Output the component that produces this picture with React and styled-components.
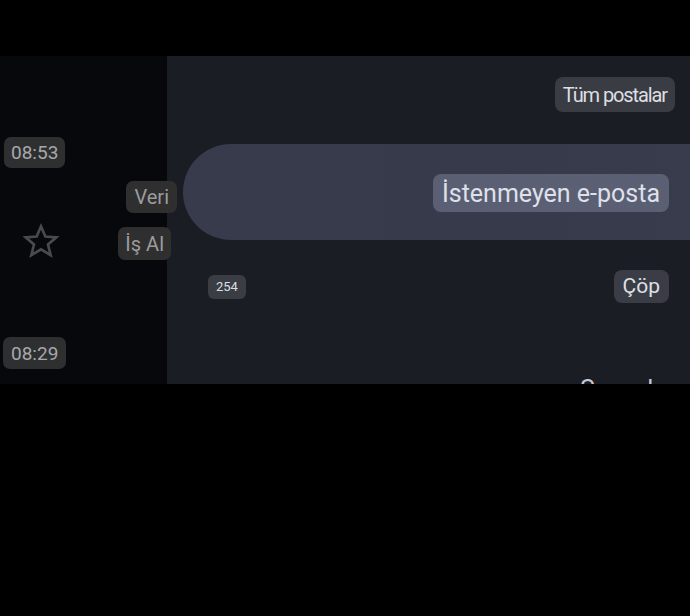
import React from "react";
import styled, { createGlobalStyle } from "styled-components";

const Global = createGlobalStyle`
  html, body { margin: 0; padding: 0; background: #000; }
  body { font-family: Roboto, "Noto Sans", "Liberation Sans", sans-serif; }
`;

const Page = styled.div`
  width: 690px;
  height: 616px;
  background: #000;
  display: flex;
  flex-direction: column;
  overflow: hidden;
`;

const TopBar = styled.div`
  height: 56px;
  flex: none;
  background: #000;
`;

const Content = styled.div`
  height: 328px;
  flex: none;
  display: grid;
  grid-template-columns: 167px 1fr;
  overflow: hidden;
`;

const LeftPanel = styled.div`
  background: #07080b;
  display: flex;
  flex-direction: column;
  padding: 81px 0 0 4px;
  position: relative;
  z-index: 1;
  & > * { flex: none; }
`;

const Chip = styled.span`
  display: inline-flex;
  align-items: center;
  justify-content: center;
  box-sizing: border-box;
  height: ${(p) => p.$h}px;
  padding: 0 ${(p) => p.$px}px;
  border-radius: ${(p) => p.$r || 7}px;
  background: ${(p) => p.$bg};
  color: ${(p) => p.$fg};
  font-size: ${(p) => p.$fs}px;
  letter-spacing: ${(p) => p.$ls || 0}px;
  white-space: nowrap;
  line-height: 1;
`;

const TimeRow = styled.div`
  display: flex;
  margin-left: ${(p) => p.$ml || 0}px;
  margin-top: ${(p) => p.$mt || 0}px;
`;

const StarRow = styled.div`
  display: flex;
  justify-content: space-between;
  align-items: flex-start;
  margin-top: 13px;
`;

const StarWrap = styled.div`
  margin: 40px 0 0 17px;
  width: 40px;
  height: 40px;
  display: flex;
`;

const LabelStack = styled.div`
  display: flex;
  flex-direction: column;
  align-items: flex-end;
  gap: 14px;
`;

const LabelSlot = styled.div`
  margin-right: ${(p) => p.$mr}px;
  display: flex;
`;

const RightPanel = styled.div`
  background: #1b1d24;
  display: flex;
  flex-direction: column;
  padding-top: 21px;
  overflow: hidden;
  & > * { flex: none; }
`;

const TopRow = styled.div`
  display: flex;
  justify-content: flex-end;
  padding-right: 15px;
`;

const Pill = styled.div`
  margin: 32px -60px 0 16px;
  height: 96px;
  border-radius: 48px;
  background: linear-gradient(90deg, #373b4c 0%, #363a4a 60%, #383c4c 100%);
  display: flex;
  align-items: center;
  justify-content: flex-end;
  padding-right: 81px;
  padding-top: 2px;
  box-sizing: border-box;
`;

const CountRow = styled.div`
  display: flex;
  justify-content: space-between;
  align-items: center;
  margin-top: 30px;
  padding: 0 21px 0 41px;
`;

const BottomText = styled.div`
  margin-top: 74px;
  padding-left: 413px;
  color: #c8cad2;
  font-size: 25px;
  line-height: 1;
  white-space: nowrap;
`;

const Star = () => (
  <svg width="40" height="40" viewBox="0 0 24 24" fill="none">
    <path
      d="M12 3.2l2.6 6.1 6.6.5-5 4.3 1.6 6.4L12 17l-5.8 3.5 1.6-6.4-5-4.3 6.6-.5z"
      stroke="#4a4a4c"
      strokeWidth="1.6"
      strokeLinejoin="miter"
    />
  </svg>
);

export default function App() {
  return (
    <>
      <Global />
      <Page>
        <TopBar />
        <Content>
          <LeftPanel>
            <TimeRow>
              <Chip $h={31} $px={7} $r={7} $bg="#2e2f31" $fg="#a8a8aa" $fs={19}>
                08:53
              </Chip>
            </TimeRow>
            <StarRow>
              <StarWrap>
                <Star />
              </StarWrap>
              <LabelStack>
                <LabelSlot $mr={-10}>
                  <Chip $h={32} $px={8} $r={7} $bg="#2f2f30" $fg="#9c9c9e" $fs={20}>
                    Veri
                  </Chip>
                </LabelSlot>
                <LabelSlot $mr={-4}>
                  <Chip $h={33} $px={7} $r={7} $bg="#2f2f30" $fg="#9c9c9e" $fs={20}>
                    İş Al
                  </Chip>
                </LabelSlot>
              </LabelStack>
            </StarRow>
            <TimeRow $mt={76} $ml={-1}>
              <Chip $h={32} $px={8} $r={7} $bg="#2e2f31" $fg="#a8a8aa" $fs={19}>
                08:29
              </Chip>
            </TimeRow>
          </LeftPanel>
          <RightPanel>
            <TopRow>
              <Chip $h={35} $px={8} $r={8} $bg="#3a3c44" $fg="#dedfe3" $fs={20} $ls={-1.1}>
                Tüm postalar
              </Chip>
            </TopRow>
            <Pill>
              <Chip $h={38} $px={9} $r={8} $bg="#5a5f73" $fg="#dfe1ea" $fs={25}>
                İstenmeyen e-posta
              </Chip>
            </Pill>
            <CountRow>
              <Chip $h={24} $px={8} $r={6} $bg="#3b3d45" $fg="#dcdde2" $fs={13}>
                254
              </Chip>
              <Chip $h={33} $px={9} $r={8} $bg="#3a3d45" $fg="#dfe0e5" $fs={21}>
                Çöp
              </Chip>
            </CountRow>
            <BottomText>Sosyal</BottomText>
          </RightPanel>
        </Content>
      </Page>
    </>
  );
}
